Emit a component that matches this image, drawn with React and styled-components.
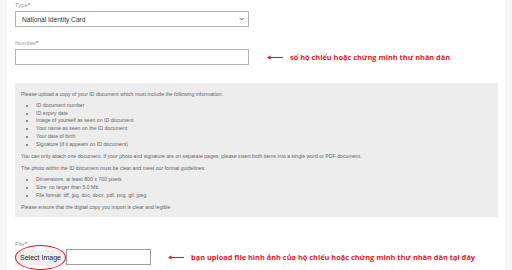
import React from "react";
import styled, { createGlobalStyle } from "styled-components";

const GlobalStyle = createGlobalStyle`
  html, body {
    margin: 0;
    padding: 0;
    background: #f8f8f8;
  }
  body {
    font-family: "Liberation Sans", Arial, sans-serif;
  }
`;

const Page = styled.div`
  width: 498px;
  height: 270px;
  margin-left: 7px;
  background: #fff;
  padding: 1px 7px 0 8px;
  box-sizing: border-box;
  overflow: hidden;
`;

const Label = styled.div`
  font-size: 6px;
  line-height: 8px;
  color: #9a9a9a;
  margin-top: ${(p) => p.$top || 0}px;

  span {
    color: #e0303a;
  }
`;

const Row = styled.div`
  display: flex;
  align-items: center;
  margin-top: 2px;
`;

const Field = styled.div`
  width: 234px;
  height: 16px;
  box-sizing: border-box;
  border: 1px solid #b3b3b3;
  background: #fff;
  display: flex;
  align-items: center;
  justify-content: space-between;
  padding: 0 4px 0 6px;
  font-size: 6.6px;
  color: #333;
`;

const Note = styled.div`
  display: flex;
  align-items: center;
  margin-left: ${(p) => p.$gap}px;
  color: #e8121c;
  font-family: "Open Sans", sans-serif;
  font-weight: 700;
  font-size: 7.4px;
  white-space: nowrap;

  svg {
    margin-right: 7px;
  }
`;

const Panel = styled.div`
  background: #ededed;
  margin-top: 18px;
  padding: 8px 6px 5px 6px;
  font-size: 5.2px;
  line-height: 7.8px;
  color: #666;

  p {
    margin: 4.5px 0 0;
  }
  p:first-child {
    margin-top: 0;
  }
  ul {
    margin: 3px 0 0;
    padding-left: 15px;
  }
`;

const FileRow = styled.div`
  display: flex;
  align-items: center;
  margin-top: 1px;
`;

const Picker = styled.div`
  position: relative;
  display: flex;
`;

const PickButton = styled.div`
  height: 16px;
  width: 51px;
  box-sizing: border-box;
  background: #efefef;
  font-size: 7px;
  color: #222;
  display: flex;
  align-items: center;
  justify-content: center;
  margin-top: 1px;
`;

const FileBox = styled.div`
  width: 85px;
  height: 16px;
  box-sizing: border-box;
  border: 1px solid #9e9e9e;
  background: #fff;
`;

const Ring = styled.div`
  position: absolute;
  left: 0;
  top: -4px;
  width: 51px;
  height: 25px;
  box-sizing: border-box;
  border: 1.3px solid #e5141c;
  border-radius: 50%;
`;

const Arrow = () => (
  <svg width="16" height="5" viewBox="0 0 16 5">
    <line x1="2" y1="2.5" x2="16" y2="2.5" stroke="#e8121c" strokeWidth="1.1" />
    <path d="M0 2.5 L3.5 0.6 L3.5 4.4 Z" fill="#e8121c" />
  </svg>
);

export default function App() {
  return (
    <>
      <GlobalStyle />
      <Page>
        <Label>
          Type<span>*</span>
        </Label>
        <Row>
          <Field>
            National Identity Card
            <svg width="5" height="4" viewBox="0 0 5 4">
              <path d="M0.6 1 L2.5 3 L4.4 1" fill="none" stroke="#555" strokeWidth="0.9" />
            </svg>
          </Field>
        </Row>
        <Label $top={12}>
          Number<span>*</span>
        </Label>
        <Row>
          <Field />
          <Note $gap={18}>
            <Arrow />
            số hộ chiếu hoặc chứng minh thư nhân dân
          </Note>
        </Row>

        <Panel>
          <p>
            Please upload a copy of your ID document which must include the
            following information:
          </p>
          <ul>
            <li>ID document number</li>
            <li>ID expiry date</li>
            <li>Image of yourself as seen on ID document</li>
            <li>Your name as seen on the ID document</li>
            <li>Your date of birth</li>
            <li>Signature (if it appears on ID document)</li>
          </ul>
          <p>
            You can only attach one document. If your photo and signature are
            on separate pages, please insert both items into a single word or
            PDF document.
          </p>
          <p>
            The photo within the ID document must be clear and meet our format
            guidelines:
          </p>
          <ul>
            <li>Dimensions: at least 800 x 700 pixels</li>
            <li>Size: no larger than 5.0 Mb</li>
            <li>File format: tiff, jpg, doc, docx, pdf, png, gif, jpeg</li>
          </ul>
          <p>Please ensure that the digital copy you import is clear and legible</p>
        </Panel>

        <Label $top={23}>
          File<span>*</span>
        </Label>
        <FileRow>
          <Picker>
            <PickButton>Select Image</PickButton>
            <Ring />
          </Picker>
          <FileBox />
          <Note $gap={17}>
            <Arrow />
            bạn upload file hình ảnh của hộ chiếu hoặc chứng minh thư nhân dân tại đây
          </Note>
        </FileRow>
      </Page>
    </>
  );
}
